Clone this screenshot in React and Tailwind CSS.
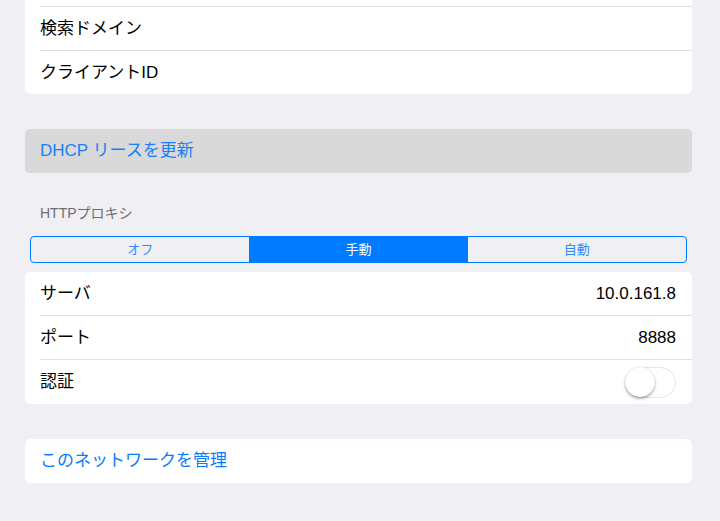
import React from 'react';

const font = { fontFamily: '"Helvetica Neue", "Liberation Sans", "Noto Sans CJK JP", sans-serif' };

function Row({ label, value, last, children, blue, short }) {
  return (
    <div className="pl-[15px]">
      <div
        className={`flex items-center justify-between pr-[16px] ${short ? 'h-[43px]' : 'h-[44px]'} ${
          last ? '' : 'border-b border-[#dedee2]'
        }`}
      >
        <span className={`text-[17px] ${blue ? 'text-[#0a7aff]' : 'text-black'}`}>{label}</span>
        {value && <span className="text-[17px] text-black">{value}</span>}
        {children}
      </div>
    </div>
  );
}

function Toggle() {
  return (
    <div className="relative h-[31px] w-[51px] rounded-full border-[1.5px] border-[#e5e5ea] bg-white">
      <div className="absolute left-[-1px] top-[-1px] h-[30px] w-[30px] rounded-full bg-white shadow-[0_2px_3px_rgba(0,0,0,0.3),0_0_0_0.5px_rgba(0,0,0,0.1)]" />
    </div>
  );
}

export default function App() {
  const segments = ['オフ', '手動', '自動'];
  return (
    <div style={font} className="min-h-[521px] w-[720px] overflow-hidden bg-[#efeff4] pl-[25px] pr-[28px]">
      <div className="rounded-b-[5px] bg-white">
        <div className="pl-[15px]">
          <div className="h-[7px] border-b border-[#dedee2]" />
        </div>
        <Row label="検索ドメイン" />
        <Row label="クライアントID" last short />
      </div>

      <div className="mt-[35px] flex h-[44px] items-center rounded-[5px] bg-[#d9d9d9] px-[15px]">
        <span className="text-[17px] text-[#1a7efb]">DHCP リースを更新</span>
      </div>

      <div className="pl-[15px] pt-[32px] text-[14px] leading-[16px] text-[#6d6d72]">HTTPプロキシ</div>

      <div className="mx-[5px] mt-[15px] flex h-[27px] overflow-hidden rounded-[4px] border border-[#007aff]">
        {segments.map((s, i) => (
          <div
            key={s}
            className={`flex flex-1 items-center justify-center text-[13px] ${
              i === 1 ? 'bg-[#007aff] text-white' : 'text-[#2f8cff]'
            }`}
          >
            {s}
          </div>
        ))}
      </div>

      <div className="mt-[9px] rounded-[5px] bg-white">
        <Row label="サーバ" value="10.0.161.8" />
        <Row label="ポート" value="8888" />
        <Row label="認証" last>
          <Toggle />
        </Row>
      </div>

      <div className="mt-[35px] rounded-[5px] bg-white">
        <Row label="このネットワークを管理" blue last />
      </div>
    </div>
  );
}
